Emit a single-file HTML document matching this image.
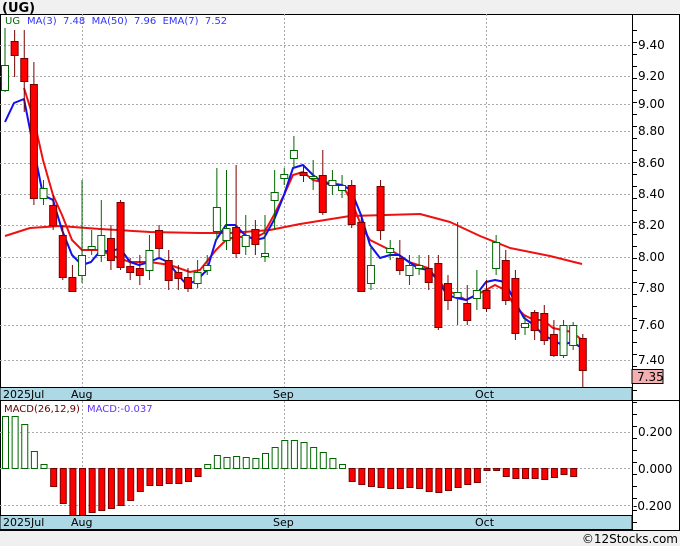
<!DOCTYPE html>
<html><head><meta charset="utf-8"><style>
body{margin:0;width:680px;height:546px;background:#f0f0f0;font-family:"DejaVu Sans","Liberation Sans",sans-serif;overflow:hidden;position:relative}
svg{position:absolute;left:0;top:0}
</style></head><body>
<svg width="680" height="546" viewBox="0 0 680 546" font-family="DejaVu Sans, Liberation Sans, sans-serif">
<rect x="0" y="0" width="680" height="546" fill="#f0f0f0"/>
<text x="2" y="12" font-size="13" font-weight="bold" fill="#000">(UG)</text>
<rect x="0" y="14" width="680" height="516" fill="#fff"/>
<line x1="0" y1="14.5" x2="680" y2="14.5" stroke="#000"/>
<line x1="679.5" y1="14" x2="679.5" y2="530" stroke="#000"/>
<line x1="632.5" y1="14" x2="632.5" y2="530" stroke="#000"/>
<line x1="0.5" y1="14" x2="0.5" y2="530" stroke="#000"/>
<g id="grid" stroke="#aaa" stroke-dasharray="2,2"></g>
<g id="lines"></g>
<g id="cdl"></g>
<rect x="0" y="387.5" width="632" height="13" fill="#add8e6" stroke="#000"/>
<rect x="0" y="515.5" width="632" height="14" fill="#add8e6" stroke="#000"/>
<line x1="632" y1="400.5" x2="680" y2="400.5" stroke="#000"/>
<line x1="0" y1="530.5" x2="680" y2="530.5" stroke="#000"/>
<g font-size="11" fill="#000">
<text x="3" y="398">2025Jul</text><text x="71" y="398">Aug</text><text x="273" y="398">Sep</text><text x="475" y="398">Oct</text>
<text x="3" y="526">2025Jul</text><text x="71" y="526">Aug</text><text x="273" y="526">Sep</text><text x="475" y="526">Oct</text>
</g>
<g font-size="12" fill="#000">
<text x="638" y="49">9.40</text><text x="638" y="80">9.20</text><text x="638" y="108">9.00</text><text x="638" y="135">8.80</text><text x="638" y="167">8.60</text><text x="638" y="198">8.40</text><text x="638" y="229">8.20</text><text x="638" y="261">8.00</text><text x="638" y="292">7.80</text><text x="638" y="329">7.60</text><text x="638" y="364">7.40</text>
<text x="638" y="436">0.200</text><text x="638" y="473">0.000</text><text x="633" y="510">-0.200</text>
</g>
<rect x="632" y="369.5" width="31" height="14" fill="#f4b0b0" stroke="#000"/>
<text x="637" y="381" font-size="12" fill="#000">7.35</text>
<g font-size="10">
<text x="5" y="24" fill="#060">UG</text><text x="27" y="24" fill="#33f">MA(3)&#160; 7.48&#160; MA(50)&#160; 7.96&#160; EMA(7)&#160; 7.52</text>
<text x="4" y="412" fill="#600">MACD(26,12,9)</text><text x="87" y="412" fill="#63f">MACD:-0.037</text>
</g>
<text x="678" y="543" font-size="12" text-anchor="end" fill="#000">©12Stocks.com</text>
</svg>
<script>
const ns="http://www.w3.org/2000/svg";
function el(p,t,a){const e=document.createElementNS(ns,t);for(const k in a)e.setAttribute(k,a[k]);document.getElementById(p).appendChild(e);return e;}
[45,76,104,131,163,194,225,257,288,325,360].forEach(y=>el("grid","line",{x1:0,x2:632,y1:y+.5,y2:y+.5}));
[432,468,505].forEach(y=>el("grid","line",{x1:0,x2:632,y1:y+.5,y2:y+.5}));
[82,284,486].forEach(x=>{el("grid","line",{x1:x+.5,x2:x+.5,y1:14,y2:387});el("grid","line",{x1:x+.5,x2:x+.5,y1:401,y2:515});});
for(let y=30;y<530;y+=12){el("grid","line",{x1:632,x2:637,y1:y+.5,y2:y+.5,stroke:"#000","stroke-dasharray":"none"});}
const C=[[65,90,28,92,1],[41,55,30,77,0],[58,81,30,112,0],[84,198,62,205,0],[188,198,180,205,1],[205,225,195,230,0],[235,277,225,280,0],[277,291,265,292,0],[255,275,180,283,1],[246,249,230,255,1],[235,255,200,262,1],[238,260,225,270,0],[202,267,200,270,0],[266,272,258,280,0],[268,275,255,285,0],[250,270,235,280,1],[230,248,225,258,0],[260,280,250,290,0],[272,278,265,290,0],[277,288,268,292,0],[272,283,260,288,1],[265,270,255,275,1],[207,231,168,240,1],[228,240,170,250,1],[227,253,165,258,0],[235,246,215,255,1],[229,244,220,255,0],[253,256,215,262,1],[192,200,170,230,1],[174,178,168,185,1],[150,158,136,168,1],[172,175,165,182,0],[176,178,160,190,1],[175,212,150,215,0],[180,185,170,195,1],[185,190,175,198,1],[185,224,180,228,0],[222,291,215,292,0],[265,283,245,290,1],[186,230,180,240,0],[248,252,240,260,1],[258,270,240,275,0],[265,275,255,285,1],[265,268,255,275,1],[268,282,255,290,0],[263,327,255,330,0],[283,300,275,310,0],[292,297,222,325,1],[303,320,285,325,0],[290,298,270,310,1],[290,308,280,312,0],[242,268,235,275,1],[260,300,250,305,0],[278,333,270,340,0],[323,327,315,335,1],[312,330,310,340,0],[313,340,305,345,0],[334,355,320,357,0],[325,355,320,358,1],[325,345,322,350,1],[338,370,334,387,0]];
const M=[416,416,424,451,464,486,503,515,515,512,510,508,505,500,491,485,485,483,483,481,476,464,455,457,456,457,458,453,447,440,440,442,447,452,458,464,481,484,486,487,488,488,487,488,491,492,490,487,484,482,470,470,476,478,478,478,479,477,474,476];
const X=i=>5+i*9.63;
M.forEach((v,i)=>{const x=X(i)-3;const up=v<468;el("cdl","rect",{x:x+.5,y:up?v+.5:468.5,width:6,height:Math.max(1,Math.abs(v-468)),fill:up?"#fff":"#f00",stroke:up?"#060":"#700"});});
function pl(pts,col,w){el("lines","polyline",{points:pts,fill:"none",stroke:col,"stroke-width":w,"stroke-linejoin":"round"});}
pl("5,236 30,228 60,226 100,229 150,232 200,233 230,233 270,230 300,224 350,216 420,214 450,222 480,236 510,248 550,256 582,264","#e11",2);
pl("24,88 34,120 43,160 53,195 62,215 72,240 82,250 91,250 101,250 110,255 130,262 150,262 170,265 190,272 200,270 216,250 226,240 235,237 245,237 255,238 264,233 274,215 284,195 293,175 303,172 313,180 322,182 332,183 342,185 351,200 361,225 370,240 380,245 390,250 399,255 409,262 418,265 428,268 438,280 447,290 457,295 466,300 476,295 486,290 495,285 505,290 514,305 524,315 534,320 543,320 553,328 562,330 572,332 582,340","#e11",2);
pl("5,122 14,103 24,99 34,150 43,195 53,200 62,230 72,255 82,265 91,262 101,250 110,252 120,248 130,262 139,265 149,262 159,258 168,262 178,275 187,285 197,280 207,270 216,240 226,225 235,225 245,235 255,240 264,238 274,220 284,195 293,168 303,165 313,175 322,182 332,185 342,185 351,190 361,215 370,245 380,258 390,255 399,255 409,262 418,268 428,270 438,280 447,295 457,298 466,300 476,295 486,282 495,280 505,282 514,300 524,318 534,325 543,335 553,340 562,345 572,342 582,348","#11e",2);
C.forEach((c,i)=>{const x=X(i);const g=c[4];el("cdl","line",{x1:x,x2:x,y1:c[2],y2:c[3],stroke:g?"#060":"#700"});el("cdl","rect",{x:x-3.5,y:c[0]+.5,width:7,height:Math.max(1,c[1]-c[0]),fill:g?"#fff":"#f00",stroke:g?"#060":"#700"});});
</script>
</body></html>
